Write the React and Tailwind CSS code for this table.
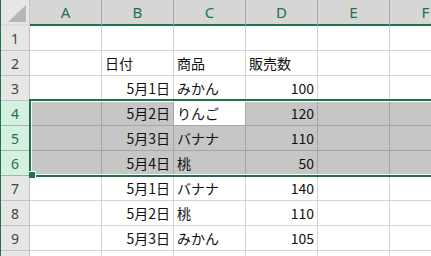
import React from "react";

const columns = ["A", "B", "C", "D", "E", "F"];

// row number, date, item, qty (B, C, D)
const rows = [
  { n: 1 },
  { n: 2, date: "日付", item: "商品", qty: "販売数", heading: true },
  { n: 3, date: "5月1日", item: "みかん", qty: 100 },
  { n: 4, date: "5月2日", item: "りんご", qty: 120, selected: true },
  { n: 5, date: "5月3日", item: "バナナ", qty: 110, selected: true },
  { n: 6, date: "5月4日", item: "桃", qty: 50, selected: true },
  { n: 7, date: "5月1日", item: "バナナ", qty: 140 },
  { n: 8, date: "5月2日", item: "桃", qty: 110 },
  { n: 9, date: "5月3日", item: "みかん", qty: 105 },
  { n: 10, date: "5月4日", item: "りんご", qty: 130 },
];

const cellFont = { fontFamily: '"Noto Sans CJK JP", "Noto Sans", sans-serif' };

const Cell = ({ selected, active, align = "left", children }) => {
  const bg = active ? "bg-white" : selected ? "bg-[#c6c6c6]" : "bg-white";
  const line = selected ? "border-[#a6a6a6]" : "border-[#d4d4d4]";
  const justify = align === "right" ? "justify-end pr-[3px]" : "justify-start pl-[3px]";
  return (
    <div
      className={`flex h-full w-[72px] shrink-0 items-center border-r border-b ${bg} ${line} ${justify} text-[14px] leading-none text-[#111]`}
      style={cellFont}
    >
      {children}
    </div>
  );
};

const Row = ({ row }) => {
  const head = row.selected
    ? "bg-[#d3f0e0] text-[#217346] border-[#9ab8a6]"
    : "bg-[#e6e6e6] text-[#444] border-[#c4c4c4]";
  const showValues = row.date !== undefined;
  return (
    <div className="flex h-[25px]">
      <div
        className={`flex h-full w-[29px] shrink-0 items-center justify-center border-r border-b ${head} text-[14px]`}
        style={{ fontFamily: '"Noto Sans", sans-serif' }}
      >
        {row.n}
      </div>
      <Cell selected={row.selected} />
      <Cell selected={row.selected} align={row.heading ? "left" : "right"}>
        {showValues && row.date}
      </Cell>
      <Cell selected={row.selected} active={row.n === 4}>
        {showValues && row.item}
      </Cell>
      <Cell selected={row.selected} align={row.heading ? "left" : "right"}>
        {showValues && row.qty}
      </Cell>
      <Cell selected={row.selected} />
      <Cell selected={row.selected} />
    </div>
  );
};

export default function App() {
  return (
    <div className="relative h-[256px] w-[431px] overflow-hidden border-l border-[#217346] bg-white">
      <div className="flex h-[26px]">
        <div className="relative w-[29px] shrink-0 border-r border-b-2 border-r-[#c4c4c4] border-b-[#dcdcdc] bg-[#e6e6e6]">
          <svg className="absolute right-[3px] bottom-[2px]" width="18" height="17" viewBox="0 0 18 17">
            <polygon points="18,0 18,17 0,17" fill="#b7b7b7" />
          </svg>
        </div>
        {columns.map((c) => (
          <div
            key={c}
            className="flex w-[72px] shrink-0 items-center justify-center border-r border-b-2 border-r-[#ababab] border-b-[#217346] bg-[#d6d6d6] text-[15px] text-[#217346]"
            style={{ fontFamily: '"Noto Sans", sans-serif' }}
          >
            {c}
          </div>
        ))}
      </div>

      {rows.map((r) => (
        <Row key={r.n} row={r} />
      ))}

      {/* selection outline over rows 4-6 */}
      <div className="pointer-events-none absolute left-[28px] top-[99px] h-[78px] w-[420px] border-2 border-[#217346]">
        <div className="h-full w-full border border-white" />
      </div>
      {/* fill handle */}
      <div className="pointer-events-none absolute left-[28px] top-[171px] h-[7px] w-[7px] border-t border-r border-white bg-[#217346]" />
    </div>
  );
}
